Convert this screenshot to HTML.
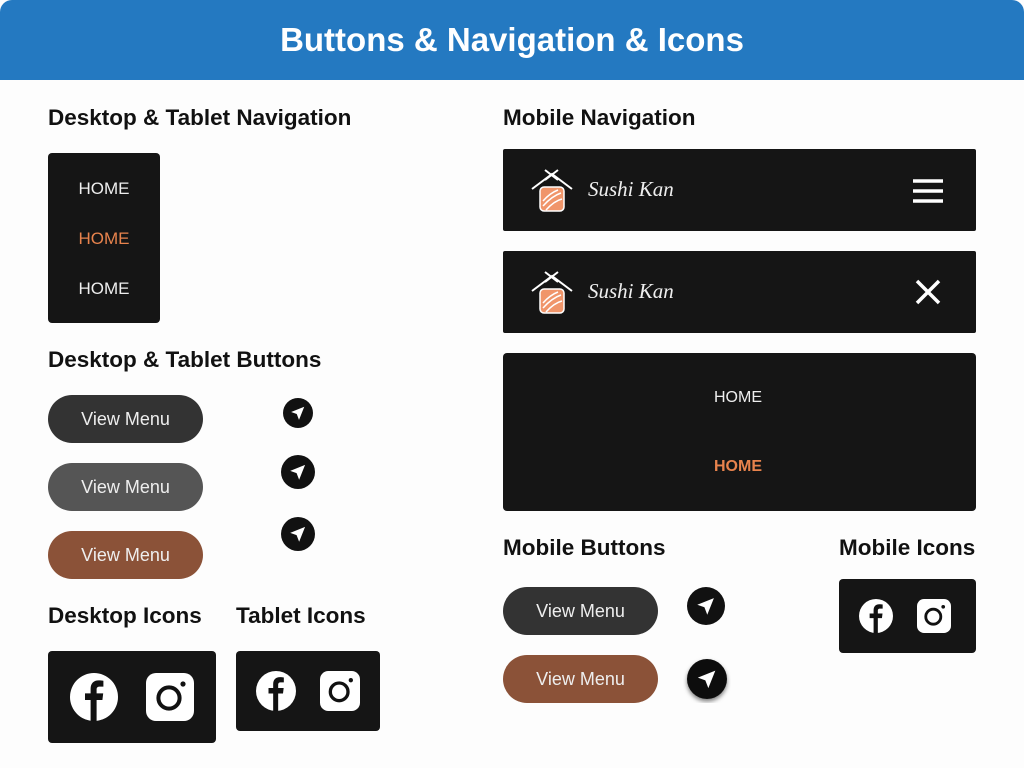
<!DOCTYPE html><html><head><style>
*{margin:0;padding:0;box-sizing:border-box}
body{width:1024px;height:768px;background:#fdfdfd;font-family:"Liberation Sans",sans-serif;position:relative;overflow:hidden}
.hdr{position:absolute;left:0;top:0;width:1024px;height:80px;background:#2479c1;border-radius:12px 12px 0 0;color:#fff;font-weight:bold;font-size:33px;text-align:center;line-height:80px}
.h{position:absolute;font-weight:bold;font-size:22.5px;color:#111;line-height:24px}
.box{position:absolute;background:#151515;border-radius:4px}
.t{position:absolute;color:#eee;font-size:17px;text-align:center}
.btn{position:absolute;width:155px;height:48px;border-radius:24px;color:#eee;font-size:18px;text-align:center;line-height:48px}
svg{position:absolute}
</style></head><body>
<div class="hdr">Buttons &amp; Navigation &amp; Icons</div>
<div class="h" style="left:48px;top:106px">Desktop &amp; Tablet Navigation</div>
<div class="h" style="left:503px;top:106px">Mobile Navigation</div>
<div class="h" style="left:48px;top:348px">Desktop &amp; Tablet Buttons</div>
<div class="h" style="left:48px;top:604px">Desktop Icons</div>
<div class="h" style="left:236px;top:604px">Tablet Icons</div>
<div class="h" style="left:503px;top:536px">Mobile Buttons</div>
<div class="h" style="left:839px;top:536px">Mobile Icons</div>

<div class="box" style="left:48px;top:153px;width:112px;height:170px">
<div class="t" style="left:0;width:112px;top:26px">HOME</div>
<div class="t" style="left:0;width:112px;top:76px;color:#e8834d">HOME</div>
<div class="t" style="left:0;width:112px;top:126px">HOME</div>
</div>

<div class="btn" style="left:48px;top:395px;background:#333">View Menu</div>
<div class="btn" style="left:48px;top:463px;background:#555">View Menu</div>
<div class="btn" style="left:48px;top:531px;background:#8b5238">View Menu</div>
<div class="btn" style="left:503px;top:587px;background:#333">View Menu</div>
<div class="btn" style="left:503px;top:655px;background:#8b5238">View Menu</div>

<svg style="left:283px;top:398px" width="30" height="30" viewBox="0 0 24 24"><circle cx="12" cy="12" r="12" fill="#111"/><path d="M17 7L6.5 11.2 11 12.8 12.8 17.5Z" fill="#fff"/></svg>
<svg style="left:281px;top:455px" width="34" height="34" viewBox="0 0 24 24"><circle cx="12" cy="12" r="12" fill="#111"/><path d="M17 7L6.5 11.2 11 12.8 12.8 17.5Z" fill="#fff"/></svg>
<svg style="left:281px;top:517px" width="34" height="34" viewBox="0 0 24 24"><circle cx="12" cy="12" r="12" fill="#111"/><path d="M17 7L6.5 11.2 11 12.8 12.8 17.5Z" fill="#fff"/></svg>
<svg style="left:687px;top:587px" width="38" height="38" viewBox="0 0 24 24"><circle cx="12" cy="12" r="12" fill="#111"/><path d="M17 7L6.5 11.2 11 12.8 12.8 17.5Z" fill="#fff"/></svg>
<svg style="left:682px;top:654px" width="50" height="50" viewBox="-3 -3 30 30"><defs><filter id="s"><feDropShadow dx="0" dy="1.5" stdDeviation="1.2" flood-opacity=".5"/></filter></defs><circle cx="12" cy="12" r="12" fill="#111" filter="url(#s)"/><path d="M17 7L6.5 11.2 11 12.8 12.8 17.5Z" fill="#fff"/></svg>

<div class="box" style="left:503px;top:149px;width:473px;height:82px;border-radius:2px"></div>
<div class="box" style="left:503px;top:251px;width:473px;height:82px;border-radius:2px"></div>
<svg style="left:530px;top:168px" width="44" height="46" viewBox="0 0 44 46"><path d="M2 21L22 6 42 21M15 2L28 12M28 2L15 12" stroke="#fff" stroke-width="2" fill="none"/><rect x="10" y="19" width="24" height="24" rx="4" fill="#f0956a" stroke="#fff" stroke-width="1.5"/><path d="M13 38Q22 28 31 25M13 33Q20 25 28 22M16 42Q24 33 32 31" stroke="#fff" stroke-width="1.5" fill="none"/></svg>
<svg style="left:530px;top:270px" width="44" height="46" viewBox="0 0 44 46"><path d="M2 21L22 6 42 21M15 2L28 12M28 2L15 12" stroke="#fff" stroke-width="2" fill="none"/><rect x="10" y="19" width="24" height="24" rx="4" fill="#f0956a" stroke="#fff" stroke-width="1.5"/><path d="M13 38Q22 28 31 25M13 33Q20 25 28 22M16 42Q24 33 32 31" stroke="#fff" stroke-width="1.5" fill="none"/></svg>
<div style="position:absolute;left:588px;top:177px;color:#eee;font-size:21px;font-style:italic;font-family:'Liberation Serif',serif">Sushi Kan</div>
<div style="position:absolute;left:588px;top:279px;color:#eee;font-size:21px;font-style:italic;font-family:'Liberation Serif',serif">Sushi Kan</div>
<svg style="left:912px;top:178px" width="32" height="26"><path d="M1 3H31M1 13H31M1 23H31" stroke="#fff" stroke-width="3.5"/></svg>
<svg style="left:915px;top:279px" width="26" height="26"><path d="M2 2L24 24M24 2L2 24" stroke="#fff" stroke-width="3.5"/></svg>

<div class="box" style="left:503px;top:353px;width:473px;height:158px">
<div class="t" style="left:0;width:470px;top:36px;font-size:16px">HOME</div>
<div class="t" style="left:0;width:470px;top:105px;font-size:16px;color:#e8834d;font-weight:bold">HOME</div>
</div>

<div class="box" style="left:48px;top:651px;width:168px;height:92px"></div>
<div class="box" style="left:236px;top:651px;width:144px;height:80px"></div>
<div class="box" style="left:839px;top:579px;width:137px;height:74px"></div>

<svg style="left:70px;top:673px" width="48" height="48" viewBox="0 0 24 24"><circle cx="12" cy="12" r="12" fill="#fff"/><path d="M13.3 24V13.5H16.2L16.6 10.2H13.3V8.3C13.3 7.4 13.6 6.8 14.9 6.8H16.7V3.9C16.2 3.8 15.3 3.7 14.3 3.7 11.9 3.7 10.3 5.2 10.3 7.9V10.2H7.5V13.5H10.3V24Z" fill="#111"/></svg>
<svg style="left:146px;top:673px" width="48" height="48" viewBox="0 0 24 24"><rect width="24" height="24" rx="5" fill="#fff"/><circle cx="11.5" cy="12.5" r="5.3" fill="none" stroke="#111" stroke-width="2"/><circle cx="18.5" cy="5.5" r="1.3" fill="#111"/></svg>
<svg style="left:256px;top:671px" width="40" height="40" viewBox="0 0 24 24"><circle cx="12" cy="12" r="12" fill="#fff"/><path d="M13.3 24V13.5H16.2L16.6 10.2H13.3V8.3C13.3 7.4 13.6 6.8 14.9 6.8H16.7V3.9C16.2 3.8 15.3 3.7 14.3 3.7 11.9 3.7 10.3 5.2 10.3 7.9V10.2H7.5V13.5H10.3V24Z" fill="#111"/></svg>
<svg style="left:320px;top:671px" width="40" height="40" viewBox="0 0 24 24"><rect width="24" height="24" rx="5" fill="#fff"/><circle cx="11.5" cy="12.5" r="5.3" fill="none" stroke="#111" stroke-width="2"/><circle cx="18.5" cy="5.5" r="1.3" fill="#111"/></svg>
<svg style="left:859px;top:599px" width="34" height="34" viewBox="0 0 24 24"><circle cx="12" cy="12" r="12" fill="#fff"/><path d="M13.3 24V13.5H16.2L16.6 10.2H13.3V8.3C13.3 7.4 13.6 6.8 14.9 6.8H16.7V3.9C16.2 3.8 15.3 3.7 14.3 3.7 11.9 3.7 10.3 5.2 10.3 7.9V10.2H7.5V13.5H10.3V24Z" fill="#111"/></svg>
<svg style="left:917px;top:599px" width="34" height="34" viewBox="0 0 24 24"><rect width="24" height="24" rx="5" fill="#fff"/><circle cx="11.5" cy="12.5" r="5.3" fill="none" stroke="#111" stroke-width="2"/><circle cx="18.5" cy="5.5" r="1.3" fill="#111"/></svg>
</body></html>
